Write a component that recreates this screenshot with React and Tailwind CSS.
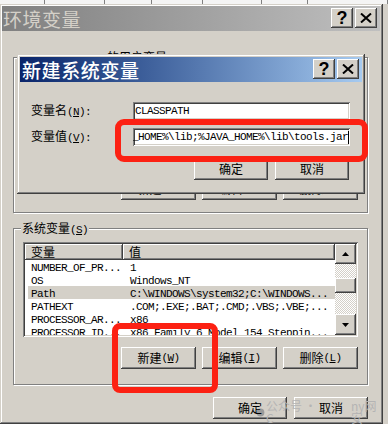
import React from "react";

const RAISED = "shadow-[inset_-1px_-1px_#404040,inset_1px_1px_#ffffff,inset_-2px_-2px_#808080,inset_2px_2px_#d4d0c8]";
const SUNKEN = "shadow-[inset_1px_1px_#808080,inset_-1px_-1px_#ffffff,inset_2px_2px_#404040,inset_-2px_-2px_#d4d0c8]";
const FRAME = "shadow-[inset_-1px_-1px_#404040,inset_1px_1px_#d4d0c8,inset_-2px_-2px_#808080,inset_2px_2px_#ffffff]";
const HEADER = "shadow-[inset_-1px_-1px_#404040,inset_1px_1px_#ffffff,inset_-2px_-2px_#808080]";
const CHECKER = "bg-[repeating-conic-gradient(#ffffff_0%_25%,#d4d0c8_0%_50%)] bg-[length:2px_2px]";

// ascii text in the old bitmap font is 6px a char
const A = ({ children }) => (
  <span className="font-['Liberation_Mono',monospace] text-[11px] tracking-[-0.6px]">{children}</span>
);

const Key = ({ k }) => (
  <A>
    (<span className="underline underline-offset-1">{k}</span>)
  </A>
);

const Btn = ({ children, w = "w-[75px]" }) => (
  <div className={`flex h-[22px] ${w} items-center justify-center bg-[#d4d0c8] text-[12px] leading-none text-black ${RAISED}`}>
    <span className="relative z-20 flex items-center">{children}</span>
  </div>
);

const CaptionButtons = () => (
  <div className="flex gap-[2px] self-start pr-[3px] pt-[2px]">
    <div className={`flex h-[20px] w-[22px] items-center justify-center bg-[#d4d0c8] ${RAISED}`}>
      <span className="font-['Liberation_Sans',sans-serif] text-[18px] font-bold leading-none text-black">?</span>
    </div>
    <div className={`flex h-[20px] w-[22px] items-center justify-center bg-[#d4d0c8] ${RAISED}`}>
      <svg width="12" height="10" viewBox="0 0 12 10">
        <path d="M1 0.5 L11 9.5 M11 0.5 L1 9.5" stroke="#000" strokeWidth="2" />
      </svg>
    </div>
  </div>
);

const rows = [
  ["NUMBER_OF_PR...", "1"],
  ["OS", "Windows_NT"],
  ["Path", "C:\\WINDOWS\\system32;C:\\WINDOWS..."],
  ["PATHEXT", ".COM;.EXE;.BAT;.CMD;.VBS;.VBE;..."],
  ["PROCESSOR_AR...", "x86"],
  ["PROCESSOR_ID...", "x86 Family 6 Model 154 Steppin..."],
];

const strip = [45, 60, 47, 51, 59, 46, 80];

export default function App() {
  return (
    <div className="relative h-[424px] w-[388px] overflow-hidden bg-[#d4d0c8] font-['Noto_Sans_CJK_SC',sans-serif] text-[12px] text-black">
      {/* edge of the window behind */}
      <div className="flex h-[4px] bg-[#f4f4f4]">
        {strip.map((w, i) => (
          <div key={i} style={{ width: w }} className="h-full border-r border-[#808080]" />
        ))}
      </div>

      {/* 环境变量 window */}
      <div className={`flex h-[420px] w-[383px] flex-col bg-[#d4d0c8] pl-[2px] pr-[3px] pt-[2px] ${FRAME}`}>
        <div className="flex h-[25px] items-center justify-between bg-linear-to-r from-[#808080] to-[#c0c0c0] pl-[1px]">
          <span className="text-[19px] leading-none tracking-[0.5px] text-[#d4d0c8]">环境变量</span>
          <CaptionButtons />
        </div>

        <div className="flex flex-1 flex-col pl-[11px]">
          {/* user variables, mostly under the dialog */}
          <div className="mt-[26px] flex h-[156px] w-[355px] flex-col border border-[#808080] shadow-[inset_1px_1px_#ffffff,1px_1px_#ffffff]">
            <div className="-mt-[8px] ml-[92px] h-[14px] self-start bg-[#d4d0c8] px-[1px] leading-[14px]">
              的用户变量<Key k="U" />
            </div>
            <div className="flex-1" />
            <div className="flex justify-end gap-[6px] pb-[12px] pr-[9px]">
              <Btn>新建<Key k="W" /></Btn>
              <Btn>编辑<Key k="I" /></Btn>
              <Btn>删除<Key k="L" /></Btn>
            </div>
          </div>

          {/* system variables */}
          <div className="mt-[15px] flex h-[157px] w-[355px] flex-col border border-[#808080] shadow-[inset_1px_1px_#ffffff,1px_1px_#ffffff]">
            <div className="-mt-[8px] ml-[7px] h-[14px] self-start bg-[#d4d0c8] px-[1px] leading-[14px]">
              系统变量<Key k="S" />
            </div>
            <div className={`ml-[9px] mt-[7px] flex h-[95px] w-[335px] bg-white p-[2px] ${SUNKEN}`}>
              <div className="flex w-[310px] flex-col overflow-hidden">
                <div className="flex h-[16px] leading-[16px]">
                  <div className={`w-[98px] bg-[#d4d0c8] pl-[6px] ${HEADER}`}>变量</div>
                  <div className={`flex-1 bg-[#d4d0c8] pl-[6px] ${HEADER}`}>值</div>
                </div>
                <div className="flex flex-col pl-[3px]">
                  {rows.map(([k, v]) => (
                    <div
                      key={k}
                      className={`flex h-[13px] shrink-0 items-center whitespace-nowrap leading-[13px] ${k === "Path" ? "bg-[#d4d0c8]" : ""}`}
                    >
                      <div className="w-[99px] pl-[3px]"><A>{k}</A></div>
                      <div className="pl-[3px]"><A>{v}</A></div>
                    </div>
                  ))}
                </div>
              </div>
              <div className="flex w-[21px] flex-col">
                <div className={`flex h-[20px] items-center justify-center bg-[#d4d0c8] ${RAISED}`}>
                  <svg width="7" height="4" viewBox="0 0 7 4"><path d="M3.5 0 L7 4 L0 4 Z" fill="#000" /></svg>
                </div>
                <div className={`h-[14px] ${CHECKER}`} />
                <div className={`h-[15px] bg-[#d4d0c8] ${RAISED}`} />
                <div className={`flex-1 ${CHECKER}`} />
                <div className={`flex h-[21px] items-center justify-center bg-[#d4d0c8] ${RAISED}`}>
                  <svg width="7" height="4" viewBox="0 0 7 4"><path d="M0 0 L7 0 L3.5 4 Z" fill="#000" /></svg>
                </div>
              </div>
            </div>
            <div className="mt-[10px] flex justify-end gap-[6px] pr-[9px]">
              <Btn>新建<Key k="W" /></Btn>
              <Btn>编辑<Key k="I" /></Btn>
              <Btn>删除<Key k="L" /></Btn>
            </div>
          </div>

          <div className="mt-[12px] flex justify-end gap-[7px] pr-[12px]">
            <Btn w="w-[74px]">确定</Btn>
            <Btn w="w-[74px]">取消</Btn>
          </div>
        </div>
      </div>

      {/* 新建系统变量 dialog on top */}
      <div className={`absolute left-[17px] top-[54px] z-[25] flex h-[140px] w-[348px] flex-col bg-[#d4d0c8] p-[3px] ${FRAME}`}>
        <div className="flex h-[25px] items-center justify-between bg-linear-to-r from-[#0a246a] to-[#a6caf0] pl-[2px]">
          <span className="text-[19px] font-medium leading-none tracking-[0.6px] text-white">新建系统变量</span>
          <CaptionButtons />
        </div>
        <div className="flex flex-col pl-[11px] pr-[12px] pt-[20px]">
          <div className="flex h-[18px] items-center">
            <div className="w-[102px] leading-[18px]">变量名<Key k="N" /><A>:</A></div>
            <div className={`flex h-[18px] flex-1 items-center bg-white pl-[2px] ${SUNKEN}`}>
              <A>CLASSPATH</A>
            </div>
          </div>
          <div className="mt-[8px] flex h-[18px] items-center">
            <div className="w-[102px] leading-[18px]">变量值<Key k="V" /><A>:</A></div>
            <div className={`flex h-[18px] flex-1 items-center justify-end overflow-hidden whitespace-nowrap bg-white pr-[1px] ${SUNKEN}`}>
              <A>_HOME%\lib;%JAVA_HOME%\lib\tools.jar</A>
              <div className="h-[13px] w-[1px] shrink-0 bg-black" />
            </div>
          </div>
          <div className="mt-[12px] flex justify-end gap-[7px] pr-[1px]">
            <Btn w="w-[74px]">确定</Btn>
            <Btn w="w-[74px]">取消</Btn>
          </div>
        </div>
      </div>

      {/* red marks */}
      <div className="absolute left-[115px] top-[119px] z-30 h-[43px] w-[253px] rounded-[9px] border-[6px] border-[#fc2113]" />
      <div className="absolute left-[112px] top-[323px] z-30 h-[70px] w-[106px] rounded-[8px] border-[6px] border-[#fc2113]" />

      {/* watermark */}
      <div className="absolute left-[256px] top-[400px] z-10 flex items-center text-[12px] leading-none text-[#b4b4b4]">
        <svg width="9" height="11" viewBox="0 0 9 11" className="mr-[1px]">
          <circle cx="4.5" cy="5.5" r="4" fill="#9a9a9a" />
        </svg>
        <span>公众号 · C</span>
        <span className="w-[25px]" />
        <span>ny网安</span>
      </div>
    </div>
  );
}
